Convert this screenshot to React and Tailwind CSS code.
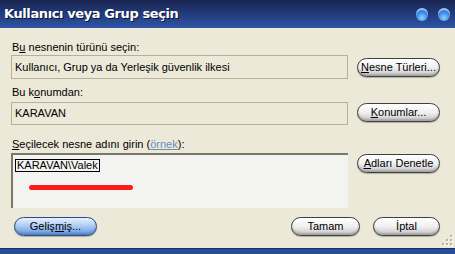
export default function App() {
  const btn =
    "h-[19px] rounded-full border border-[#3f3f3f] bg-gradient-to-b from-[#ffffff] via-[#f0f0f0] to-[#c4c4c4] shadow-[inset_0_-2px_2px_rgba(0,0,0,0.18),0_1px_1px_rgba(0,0,0,0.25)] text-[11px] leading-none text-black flex items-center justify-center";

  return (
    <div
      className="w-[455px] h-[254px] bg-[#ece9d8] flex flex-col overflow-hidden"
      style={{ fontFamily: '"Liberation Sans", Arial, sans-serif' }}
    >
      {/* title bar */}
      <div className="h-[28px] bg-gradient-to-b from-[#18244f] via-[#233b7c] to-[#2f56a6] flex items-center justify-between pl-[4px] pr-[5px]">
        <span
          className="text-white font-bold text-[13px] tracking-[-0.4px] [text-shadow:1px_1px_0_#0b1430]"
          style={{ fontFamily: '"DejaVu Sans", sans-serif' }}
        >
          Kullanıcı veya Grup seçin
        </span>
        <div className="flex gap-[10px] items-center">
          <div className="w-[12px] h-[13px] rounded-full bg-[radial-gradient(circle_at_50%_75%,#8fd0ff,#2f7fe8_55%,#1a4fa8)] shadow-[inset_0_2px_1px_rgba(255,255,255,0.6)]" />
          <div className="w-[12px] h-[13px] rounded-full bg-[radial-gradient(circle_at_50%_75%,#8fd0ff,#2f7fe8_55%,#1a4fa8)] shadow-[inset_0_2px_1px_rgba(255,255,255,0.6)]" />
        </div>
      </div>

      {/* body */}
      <div className="flex-1 pl-[11px] pr-[15px] pt-[13px] text-[11px] text-black relative">
        <div className="flex gap-[9px]">
          <div className="w-[337px]">
            <div className="leading-[13px] pl-[1px]">
              B<span className="underline">u</span> nesnenin türünü seçin:
            </div>
            <div className="mt-[1px] h-[24px] border border-[#b4b09d] flex items-center pl-[3px]">
              Kullanıcı, Grup ya da Yerleşik güvenlik ilkesi
            </div>
            <div className="mt-[7px] leading-[13px] pl-[1px]">
              Bu k<span className="underline">o</span>numdan:
            </div>
            <div className="mt-[3px] h-[23px] border border-[#b4b09d] flex items-center pl-[3px]">
              KARAVAN
            </div>
            <div className="mt-[13px] leading-[13px] pl-[1px]">
              <span className="underline">S</span>eçilecek nesne adını girin (
              <span className="underline text-[#6b8cc0]">örnek</span>):
            </div>
            <div className="mt-[2px] h-[55px] bg-[#f3f3f1] border-t-2 border-l-2 border-[#7a7868] pl-[2px] pt-[2px]">
              <div className="inline-block border border-black px-[1px] leading-[11px]">
                KARAVAN\Valek
              </div>
              <div className="mt-[11px] ml-[14px] w-[104px] h-[5px] rounded-full bg-[#ff1a1a]" />
            </div>
          </div>
          <div className="w-[83px] flex flex-col">
            <div className="mt-[17px]">
              <div className={btn}>
                <span className="underline">N</span>esne Türleri...
              </div>
            </div>
            <div className="mt-[26px]">
              <div className={btn}>
                <span className="underline">K</span>onumlar...
              </div>
            </div>
            <div className="mt-[32px]">
              <div className={btn}>
                <span className="underline">A</span>dları Denetle
              </div>
            </div>
          </div>
        </div>

        <div className="flex mt-[9px] items-center">
          <div className="ml-[3px] w-[83px] h-[19px] rounded-full border border-[#2a4a8a] bg-gradient-to-b from-[#e8f1ff] via-[#a8c8f3] to-[#5f94e0] shadow-[inset_0_-2px_2px_rgba(0,0,0,0.15),0_1px_1px_rgba(0,0,0,0.25)] text-[11px] leading-none flex items-center justify-center">
            Geliş<span className="underline">m</span>iş...
          </div>
          <div className="ml-auto flex gap-[13px]">
            <div className={btn + " w-[69px]"}>Tamam</div>
            <div className={btn + " w-[67px]"}>İptal</div>
          </div>
        </div>

        {/* resize grip */}
        <svg className="absolute right-[2px] bottom-[2px]" width="11" height="11" viewBox="0 0 11 11">
          {[
            [8, 0],
            [4, 4],
            [8, 4],
            [0, 8],
            [4, 8],
            [8, 8],
          ].map(([x, y], i) => (
            <g key={i}>
              <rect x={x + 1} y={y + 1} width="2" height="2" fill="#ffffff" />
              <rect x={x} y={y} width="2" height="2" fill="#b8b4a2" />
            </g>
          ))}
        </svg>
      </div>

      <div className="h-[6px] bg-[#2a4b96] border-t border-[#1c3170]" />
    </div>
  );
}
